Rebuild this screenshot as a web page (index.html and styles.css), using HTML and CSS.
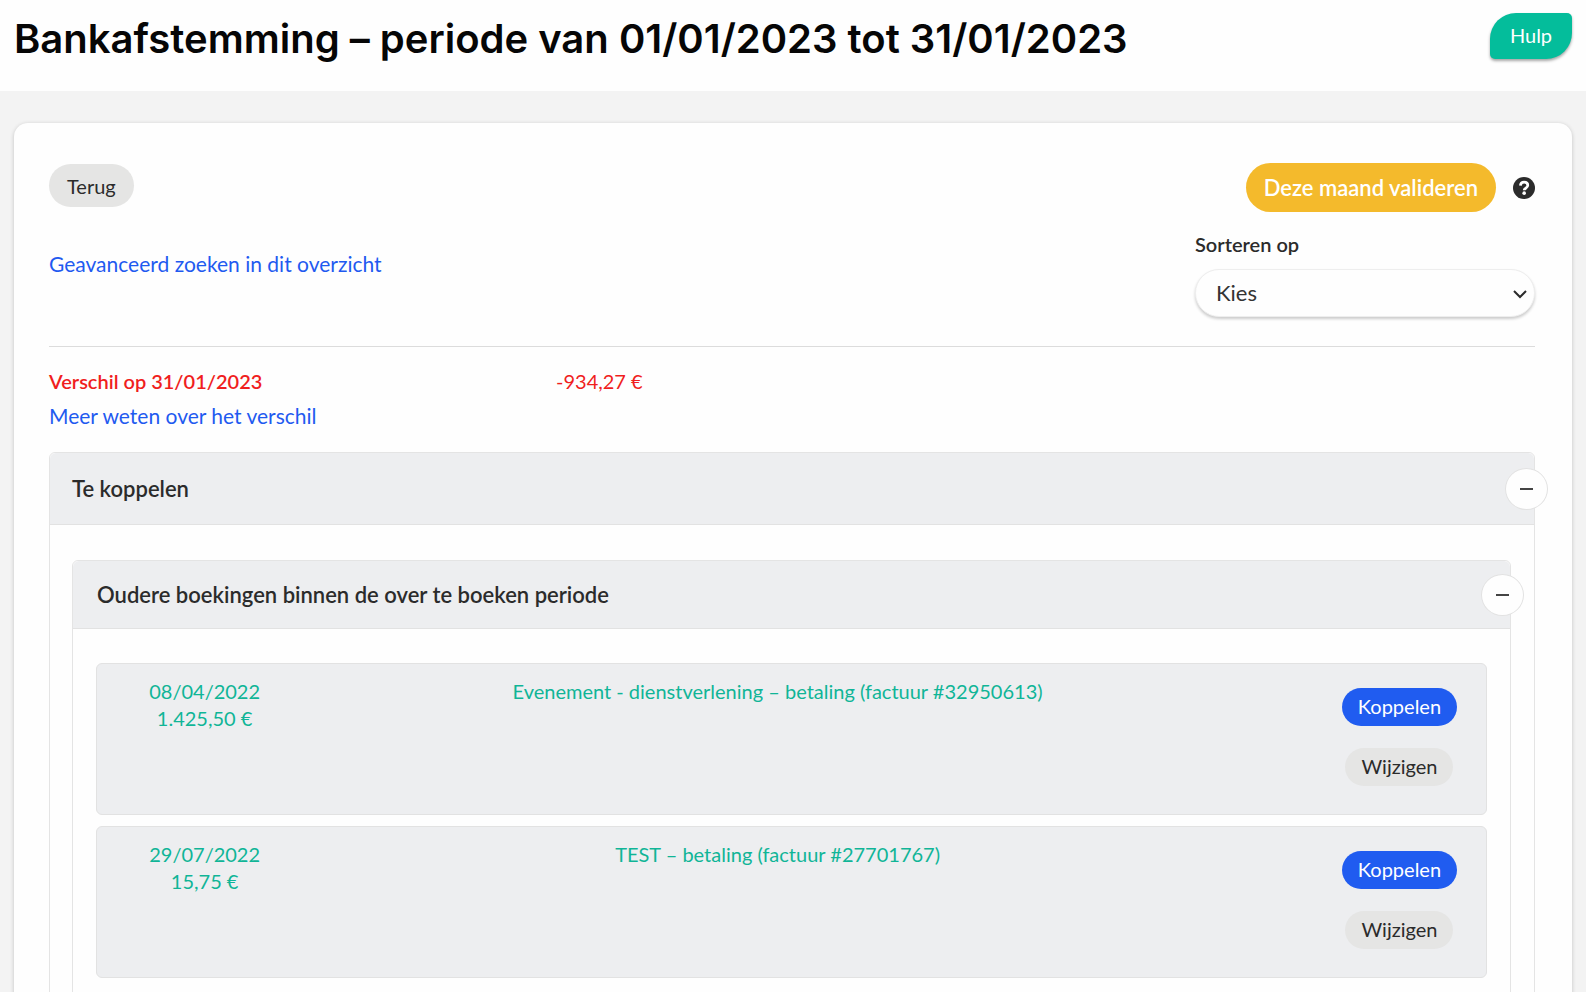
FILE: index.html
```
<!DOCTYPE html>
<html lang="nl">
<head>
  <meta charset="utf-8">
  <meta name="viewport" content="width=device-width, initial-scale=1">
  <title>Bankafstemming</title>
  <link rel="stylesheet" href="styles.css">
</head>
<body>
  <header class="page-header">
    <h1>Bankafstemming – periode van 01/01/2023 tot 31/01/2023</h1>
    <button type="button" class="help-btn">Hulp</button>
  </header>

  <main class="card">
    <div class="toolbar">
      <div class="toolbar-left">
        <button type="button" class="btn btn-grey">Terug</button>
        <a href="#">Geavanceerd zoeken in dit overzicht</a>
      </div>
      <div class="toolbar-right">
        <div class="validate">
          <button type="button" class="btn btn-yellow">Deze maand valideren</button>
          <svg class="icon-help" viewBox="0 0 512 512" role="img" aria-label="Info">
            <circle cx="256" cy="256" r="256" fill="#2b2b2b"/>
            <path d="M172 200c4-50 36-80 86-80 52 0 86 30 86 74 0 36-22 52-48 68-26 15-36 24-36 44" fill="none" stroke="#fff" stroke-width="64"/>
            <circle cx="260" cy="376" r="42" fill="#fff"/>
          </svg>
        </div>
        <label for="sort">Sorteren op</label>
        <div class="select-wrap">
          <select id="sort">
            <option>Kies</option>
            <option>Datum</option>
            <option>Bedrag</option>
          </select>
          <svg class="chevron" viewBox="0 0 14 10" aria-hidden="true">
            <path d="M1 2l6 6 6-6" fill="none" stroke="#2b2b2b" stroke-width="2"/>
          </svg>
        </div>
      </div>
    </div>

    <hr>

    <div class="difference">
      <strong>Verschil op 31/01/2023</strong>
      <span>-934,27 €</span>
    </div>
    <a href="#">Meer weten over het verschil</a>

    <section class="panel">
      <div class="panel-header">
        <h2>Te koppelen</h2>
        <button type="button" class="toggle" aria-label="Inklappen"></button>
      </div>
      <div class="panel-body">
        <section class="panel panel-inner">
          <div class="panel-header">
            <h2>Oudere boekingen binnen de over te boeken periode</h2>
            <button type="button" class="toggle" aria-label="Inklappen"></button>
          </div>
          <div class="panel-body">
            <div class="booking">
              <div>08/04/2022<br>1.425,50 €</div>
              <div>Evenement - dienstverlening – betaling (factuur #32950613)</div>
              <div class="actions">
                <button type="button" class="btn btn-small btn-blue">Koppelen</button>
                <button type="button" class="btn btn-small btn-grey">Wijzigen</button>
              </div>
            </div>
            <div class="booking">
              <div>29/07/2022<br>15,75 €</div>
              <div>TEST – betaling (factuur #27701767)</div>
              <div class="actions">
                <button type="button" class="btn btn-small btn-blue">Koppelen</button>
                <button type="button" class="btn btn-small btn-grey">Wijzigen</button>
              </div>
            </div>
          </div>
        </section>
      </div>
    </section>
  </main>
</body>
</html>
```
FILE: styles.css
```
* {
  box-sizing: border-box;
}

html {
  scrollbar-width: none;
}

body {
  margin: 0;
  background: #f3f3f3;
  color: #2b2b2b;
  font-family: Lato, "Open Sans", sans-serif;
  font-size: 20px;
  line-height: 27px;
}

a {
  color: #1f5af0;
  font-size: 21px;
  text-decoration: none;
}

button, select {
  font-family: inherit;
  font-size: inherit;
  cursor: pointer;
}

.page-header {
  display: flex;
  justify-content: space-between;
  align-items: flex-start;
  min-height: 91px;
  padding: 13px 14px;
  background: #fefefe;
}

h1 {
  margin: 0;
  color: #060606;
  font-family: Inter, sans-serif;
  font-size: 40px;
  font-weight: 600;
  line-height: 52px;
}

.help-btn {
  width: 82px;
  height: 46px;
  padding-bottom: 3px;
  border: none;
  border-radius: 26px 5px 26px 5px;
  background: #04bd9b;
  color: #fff;
  box-shadow: 0 2px 3px rgba(0, 0, 0, 0.35);
}

.card {
  margin: 32px 14px 0;
  padding: 40px 37px 40px 35px;
  border-radius: 14px;
  background: #fefefe;
  box-shadow: 0 1px 4px rgba(0, 0, 0, 0.2);
}

.toolbar {
  display: flex;
  justify-content: space-between;
}

.toolbar-left {
  display: flex;
  flex-direction: column;
  align-items: flex-start;
  gap: 43px;
  padding-top: 1px;
}

.toolbar-right {
  width: 340px;
}

.validate {
  display: flex;
  justify-content: flex-end;
  align-items: center;
  gap: 17px;
  margin-bottom: 19px;
}

.icon-help {
  width: 22px;
  height: 22px;
}

.btn {
  height: 43px;
  padding: 0 18px;
  border: none;
  border-radius: 25px;
}

.btn-small {
  height: 38px;
  padding: 0 16px 2px;
}

.btn-grey {
  background: #e5e5e4;
  color: #2b2b2b;
}

.btn-blue {
  background: #205cf0;
  color: #fff;
}

.btn-yellow {
  height: 49px;
  background: #f4ba2c;
  color: #fff;
  font-size: 22px;
  font-weight: 600;
}

label {
  display: block;
  margin-bottom: 11px;
  font-weight: 600;
}

.select-wrap {
  position: relative;
}

select {
  display: block;
  width: 100%;
  height: 48px;
  padding: 0 20px 2px;
  border: 1px solid #eeeeee;
  border-radius: 24px;
  background: #fefefe;
  color: #333;
  font-size: 22px;
  appearance: none;
  box-shadow: 0 2px 3px rgba(0, 0, 0, 0.2);
}

.chevron {
  position: absolute;
  top: 20px;
  right: 8px;
  width: 14px;
  height: 10px;
  pointer-events: none;
}

hr {
  margin: 29px 0 21px;
  border: none;
  border-top: 1px solid #dcdcdc;
}

.difference {
  display: grid;
  grid-template-columns: 507px 1fr;
  margin-bottom: 7px;
  color: #f01e1e;
}

.difference strong {
  font-weight: 600;
}

.panel {
  margin-top: 22px;
  border: 1px solid #e4e4e4;
  border-radius: 6px;
}

.panel-header {
  display: flex;
  justify-content: space-between;
  align-items: center;
  height: 72px;
  padding-left: 22px;
  border-bottom: 1px solid #e2e2e2;
  border-radius: 6px 6px 0 0;
  background: #edeef0;
}

h2 {
  margin: 0;
  font-size: 22px;
  font-weight: 600;
}

.toggle {
  display: flex;
  justify-content: center;
  align-items: center;
  width: 43px;
  height: 42px;
  margin-right: -14px;
  padding: 0;
  border: 1px solid #e2e2e2;
  border-radius: 50%;
  background: #fefefe;
}

.toggle::before {
  content: "";
  width: 13px;
  height: 2px;
  background: #444;
}

.panel-body {
  padding: 35px 23px 35px 22px;
}

.panel-inner {
  margin-top: 0;
}

.panel-inner .panel-header {
  height: 68px;
  padding-left: 24px;
}

.panel-inner .panel-body {
  padding: 34px 23px;
}

.booking {
  display: grid;
  grid-template-columns: 31fr 134fr 35fr;
  min-height: 152px;
  margin-bottom: 11px;
  padding-top: 14px;
  border: 1px solid #e2e2e2;
  border-radius: 6px;
  background: #edeef0;
  color: #10b597;
  text-align: center;
}

.actions {
  display: flex;
  flex-direction: column;
  align-items: center;
  gap: 22px;
  margin-left: 70px;
  padding-top: 10px;
}
```
